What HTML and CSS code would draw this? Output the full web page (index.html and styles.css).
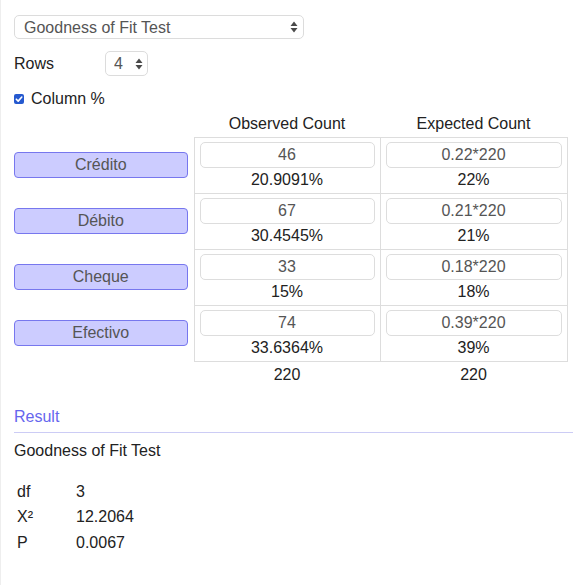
FILE: index.html
```html
<!DOCTYPE html>
<html>
<head>
<meta charset="utf-8">
<link rel="stylesheet" href="styles.css">
</head>
<body>
<div class="page">
  <div class="select-wrap select-test">
    <select class="select"><option>Goodness of Fit Test</option></select>
    <svg class="arrows" width="8" height="12" viewBox="0 0 8 12"><path d="M4 0.5 L7.5 5 L0.5 5 Z M4 11.5 L7.5 7 L0.5 7 Z" fill="#4a4a4a"/></svg>
  </div>

  <div class="rows-line">
    <span class="rows-label">Rows</span>
    <div class="select-wrap select-rows">
      <select class="select"><option>4</option></select>
      <svg class="arrows" width="8" height="12" viewBox="0 0 8 12"><path d="M4 0.5 L7.5 5 L0.5 5 Z M4 11.5 L7.5 7 L0.5 7 Z" fill="#4a4a4a"/></svg>
    </div>
  </div>

  <label class="check-line">
    <span class="checkbox"><svg width="10" height="10" viewBox="0 0 10 10"><path d="M2.3 5.2 L4.2 7.1 L7.8 3" fill="none" stroke="#fff" stroke-width="1.6" stroke-linecap="round" stroke-linejoin="round"/></svg></span>
    <span>Column %</span>
  </label>

  <table class="grid">
    <colgroup><col class="c-label"><col class="c-obs"><col class="c-exp"></colgroup>
    <thead>
      <tr><th></th><th>Observed Count</th><th>Expected Count</th></tr>
    </thead>
    <tbody>
      <tr>
        <td class="label"><button class="cat">Crédito</button></td>
        <td class="cell"><input class="num" value="46"><div class="pct">20.9091%</div></td>
        <td class="cell"><input class="num" value="0.22*220"><div class="pct">22%</div></td>
      </tr>
      <tr>
        <td class="label"><button class="cat">Débito</button></td>
        <td class="cell"><input class="num" value="67"><div class="pct">30.4545%</div></td>
        <td class="cell"><input class="num" value="0.21*220"><div class="pct">21%</div></td>
      </tr>
      <tr>
        <td class="label"><button class="cat">Cheque</button></td>
        <td class="cell"><input class="num" value="33"><div class="pct">15%</div></td>
        <td class="cell"><input class="num" value="0.18*220"><div class="pct">18%</div></td>
      </tr>
      <tr>
        <td class="label"><button class="cat">Efectivo</button></td>
        <td class="cell"><input class="num" value="74"><div class="pct">33.6364%</div></td>
        <td class="cell"><input class="num" value="0.39*220"><div class="pct">39%</div></td>
      </tr>
      <tr class="total">
        <td></td><td>220</td><td>220</td>
      </tr>
    </tbody>
  </table>

  <div class="result-head">Result</div>
  <div class="result-title">Goodness of Fit Test</div>
  <table class="stats">
    <tr><td class="k">df</td><td>3</td></tr>
    <tr><td class="k">X²</td><td>12.2064</td></tr>
    <tr><td class="k">P</td><td>0.0067</td></tr>
  </table>
</div>
</body>
</html>
```

FILE: styles.css
```css
* { box-sizing: border-box; }
html, body {
  margin: 0;
  padding: 0;
  background: #fff;
}
body {
  font-family: "Liberation Sans", Arial, Helvetica, sans-serif;
  font-size: 16px;
  color: #222;
  border-left: 1px solid #eeeeee;
  min-height: 585px;
}
.page {
  padding: 15px 0 0 13px;
}
.select-wrap {
  position: relative;
}
.select {
  appearance: none;
  -webkit-appearance: none;
  font-family: inherit;
  font-size: 16px;
  color: #555;
  background: #fff;
  border: 1px solid #dcdcdc;
  border-radius: 5px;
  outline: none;
  margin: 0;
  display: block;
  width: 100%;
}
.arrows {
  position: absolute;
  top: 50%;
  margin-top: -6px;
  pointer-events: none;
}
.select-test {
  width: 290px;
  height: 24px;
}
.select-test .select {
  height: 24px;
  padding: 0 0 0 9px;
}
.select-test .arrows { right: 6px; }
.rows-line {
  display: flex;
  align-items: center;
  margin-top: 12px;
  height: 25px;
}
.rows-label {
  width: 91px;
  color: #222;
}
.select-rows {
  width: 43px;
  height: 25px;
}
.select-rows .select {
  height: 25px;
  padding: 0 0 0 8px;
}
.select-rows .arrows { right: 5px; }
.check-line {
  display: flex;
  align-items: center;
  gap: 7px;
  height: 20px;
  margin-top: 13px;
  color: #222;
}
.checkbox {
  width: 10px;
  height: 10px;
  border-radius: 2px;
  background: #2559cf;
  display: flex;
  align-items: center;
  justify-content: center;
}
.checkbox svg { display: block; }
.grid {
  border-collapse: collapse;
  table-layout: fixed;
  width: 553px;
  margin-top: 2px;
}
.c-label { width: 180px; }
.c-obs { width: 186px; }
.c-exp { width: 187px; }
.grid th {
  font-weight: normal;
  height: 26px;
  padding: 1px 0 0;
  text-align: center;
  vertical-align: middle;
  color: #222;
}
.grid td.label {
  padding: 0 6px 0 0;
  vertical-align: middle;
  height: 56px;
}
.cat {
  display: block;
  width: 100%;
  height: 26px;
  background: #ccccff;
  border: 1px solid #7777ee;
  border-radius: 4px;
  font-family: inherit;
  font-size: 16px;
  color: #555;
  padding: 0;
  margin: 0;
}
.grid td.cell {
  border: 1px solid #dddddd;
  padding: 4px 5px 0 5px;
  height: 56px;
  vertical-align: top;
  text-align: center;
}
.num {
  display: block;
  width: 100%;
  height: 26px;
  border: 1px solid #dddddd;
  border-radius: 5px;
  font-family: inherit;
  font-size: 16px;
  color: #555;
  text-align: center;
  padding: 0;
  margin: 0;
  outline: none;
}
.pct {
  height: 24px;
  line-height: 24px;
  color: #222;
}
.total td {
  height: 28px;
  text-align: center;
  vertical-align: middle;
  padding: 0;
  color: #222;
}
.result-head {
  margin-top: 18px;
  color: #6666ee;
  line-height: 20px;
  padding-bottom: 5px;
  border-bottom: 1px solid #ccccf5;
}
.result-title {
  margin-top: 8px;
  line-height: 20px;
  color: #222;
}
.stats {
  border-collapse: collapse;
  margin-top: 18px;
}
.stats td {
  padding: 0 3px 0 3px;
  height: 25.5px;
  vertical-align: middle;
  color: #222;
}
.stats td.k {
  width: 59px;
}
```
